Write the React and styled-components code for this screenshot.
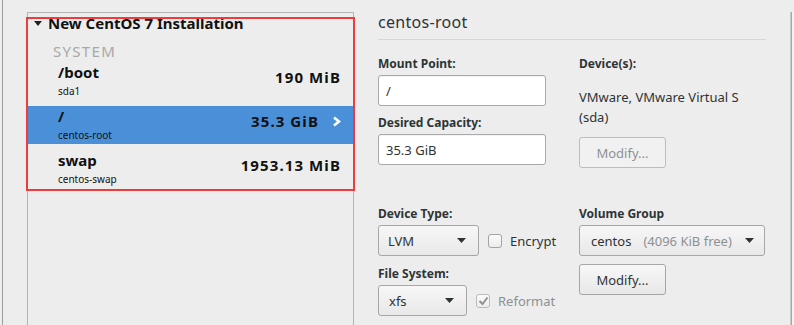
import styled, { createGlobalStyle } from "styled-components";

const GlobalStyle = createGlobalStyle`
  html, body {
    margin: 0;
    padding: 0;
    background: #ededed;
  }
  body {
    font-family: "Noto Sans", "DejaVu Sans", sans-serif;
    color: #2e3436;
  }
  #root {
    width: 794px;
    height: 325px;
    overflow: hidden;
  }
`;

const Page = styled.div`
  display: flex;
  height: 325px;
  padding-left: 2px;
  box-sizing: border-box;
  background: #ededed;
`;

const LeftPane = styled.div`
  flex: none;
  border-left: 1px solid #9e9e9e;
  padding: 12px 0 0 24px;
`;

const Panel = styled.div`
  position: relative;
  width: 327px;
  height: 320px;
  box-sizing: border-box;
  border: 1px solid #b4b4b4;
  border-bottom: none;
`;

/* red annotation frame drawn over the list */
const Highlight = styled.div`
  position: absolute;
  left: -2px;
  top: 4px;
  width: 329px;
  height: 174px;
  box-sizing: border-box;
  border: 2px solid #ef3b3b;
  pointer-events: none;
`;

const ListHeader = styled.div`
  display: flex;
  align-items: center;
  gap: 6px;
  padding: 1px 0 0 6px;
  height: 18px;
  font-size: 15px;
  line-height: 18px;
  font-weight: 700;
  color: #111;
`;

const SectionLabel = styled.div`
  margin: 10px 0 2px;
  padding-left: 25px;
  font-size: 15px;
  line-height: 18px;
  letter-spacing: 1.3px;
  color: #a8a8a8;
`;

const RowList = styled.div`
  display: flex;
  flex-direction: column;
  gap: 6px;
`;

const Row = styled.div`
  height: 38px;
  display: flex;
  justify-content: space-between;
  align-items: flex-start;
  padding: 0 12px 0 30px;
  background: ${(p) => (p.$selected ? "#4a90d9" : "transparent")};
`;

const NameCol = styled.div`
  padding-top: 1px;
`;

const Name = styled.div`
  font-size: 15px;
  line-height: 18px;
  font-weight: 700;
  color: #111;
`;

const Device = styled.div`
  margin-top: 4px;
  font-size: 10px;
  line-height: 12px;
  color: #111;
`;

const ValueWrap = styled.div`
  display: flex;
  align-items: center;
  gap: 13px;
  padding-top: 6px;
`;

const Value = styled.div`
  font-size: 15px;
  line-height: 18px;
  font-weight: 700;
  letter-spacing: 1.1px;
  color: #111;
`;

const RightPane = styled.div`
  flex: none;
  width: 388px;
  margin-left: 24px;
  padding-top: 12px;
`;

const Title = styled.div`
  font-size: 16px;
  line-height: 20px;
  letter-spacing: 0.3px;
  padding-bottom: 7px;
  border-bottom: 1px solid #d6d6d6;
`;

const Block = styled.div`
  display: grid;
  grid-template-columns: 201px 187px;
  margin-top: ${(p) => p.$top}px;
`;

const Column = styled.div`
  display: flex;
  flex-direction: column;
  align-items: flex-start;
`;

const Field = styled.div`
  display: flex;
  flex-direction: column;
  align-items: flex-start;
  margin-top: ${(p) => p.$top || 0}px;
`;

const Label = styled.div`
  font-size: 12px;
  line-height: 16px;
  font-weight: 700;
  margin-bottom: 3px;
`;

const TextInput = styled.div`
  width: 168px;
  height: 31px;
  box-sizing: border-box;
  display: flex;
  align-items: center;
  padding: 0 7px;
  border: 1px solid #a9a9a9;
  border-radius: 3px;
  background: #fff;
  box-shadow: inset 0 1px 1px rgba(0, 0, 0, 0.05);
  font-size: 13px;
`;

const DeviceText = styled.div`
  margin-top: 12px;
  font-size: 13px;
  line-height: 20px;
`;

const Button = styled.div`
  width: 87px;
  height: 31px;
  box-sizing: border-box;
  margin-top: ${(p) => p.$top || 0}px;
  display: flex;
  align-items: center;
  justify-content: center;
  border: 1px solid ${(p) => (p.$disabled ? "#bdbdbd" : "#a6a6a6")};
  border-radius: 3px;
  background: ${(p) =>
    p.$disabled ? "#f1f1f1" : "linear-gradient(#f7f7f7, #e8e8e8)"};
  color: ${(p) => (p.$disabled ? "#8e9192" : "#2e3436")};
  font-size: 13px;
`;

const ControlRow = styled.div`
  display: flex;
  align-items: center;
  gap: 9px;
`;

const Combo = styled.div`
  width: ${(p) => p.$width}px;
  height: 31px;
  box-sizing: border-box;
  display: flex;
  align-items: center;
  justify-content: space-between;
  padding: 0 ${(p) => p.$padRight || 12}px 0 ${(p) => p.$padLeft || 9}px;
  border: 1px solid #a6a6a6;
  border-radius: 3px;
  background: linear-gradient(#f7f7f7, #e8e8e8);
  font-size: 13px;
`;

const Muted = styled.span`
  margin-left: 12px;
  color: #8e9192;
`;

const Check = styled.label`
  display: flex;
  align-items: center;
  gap: 8px;
  font-size: 13px;
  color: ${(p) => (p.$disabled ? "#8e9192" : "#2e3436")};
`;

const Box = styled.span`
  width: 14px;
  height: 14px;
  box-sizing: border-box;
  display: flex;
  align-items: center;
  justify-content: center;
  border: 1px solid ${(p) => (p.$disabled ? "#bcbcbc" : "#a3a3a3")};
  border-radius: 3px;
  background: linear-gradient(#fbfbfb, #ececec);
`;

const EdgeStrip = styled.div`
  flex: none;
  margin: 12px 0 0 24px;
  width: 4px;
  border-left: 1px solid #c9c9c9;
  box-shadow: inset 1px 0 0 #a8a8a8;
  background: #f2f2f2;
`;

const Arrow = () => (
  <svg width="9" height="5" viewBox="0 0 9 5">
    <polygon points="0,0 9,0 4.5,5" fill="#2e3436" />
  </svg>
);

const rows = [
  { name: "/boot", device: "sda1", size: "190 MiB" },
  { name: "/", device: "centos-root", size: "35.3 GiB", selected: true },
  { name: "swap", device: "centos-swap", size: "1953.13 MiB" },
];

export default function App() {
  return (
    <>
      <GlobalStyle />
      <Page>
        <LeftPane>
          <Panel>
            <ListHeader>
              <svg width="8" height="5" viewBox="0 0 8 5">
                <polygon points="0,0 8,0 4,5" fill="#222" />
              </svg>
              New CentOS 7 Installation
            </ListHeader>
            <SectionLabel>SYSTEM</SectionLabel>
            <RowList>
              {rows.map((r) => (
                <Row key={r.device} $selected={r.selected}>
                  <NameCol>
                    <Name>{r.name}</Name>
                    <Device>{r.device}</Device>
                  </NameCol>
                  <ValueWrap>
                    <Value>{r.size}</Value>
                    {r.selected && (
                      <svg width="9" height="11" viewBox="0 0 9 11">
                        <polyline
                          points="2,1.5 7,5.5 2,9.5"
                          fill="none"
                          stroke="#fff"
                          strokeWidth="2.6"
                        />
                      </svg>
                    )}
                  </ValueWrap>
                </Row>
              ))}
            </RowList>
            <Highlight />
          </Panel>
        </LeftPane>

        <RightPane>
          <Title>centos-root</Title>

          <Block $top={16}>
            <Column>
              <Field>
                <Label>Mount Point:</Label>
                <TextInput>/</TextInput>
              </Field>
              <Field $top={9}>
                <Label>Desired Capacity:</Label>
                <TextInput>35.3 GiB</TextInput>
              </Field>
            </Column>
            <Column>
              <Label>Device(s):</Label>
              <DeviceText>
                VMware, VMware Virtual S
                <br />
                (sda)
              </DeviceText>
              <Button $disabled $top={10}>
                Modify...
              </Button>
            </Column>
          </Block>

          <Block $top={38}>
            <Column>
              <Field>
                <Label>Device Type:</Label>
                <ControlRow>
                  <Combo $width={101}>
                    LVM
                    <Arrow />
                  </Combo>
                  <Check>
                    <Box />
                    Encrypt
                  </Check>
                </ControlRow>
              </Field>
              <Field $top={10}>
                <Label>File System:</Label>
                <ControlRow>
                  <Combo $width={89} $padLeft={10}>
                    xfs
                    <Arrow />
                  </Combo>
                  <Check $disabled>
                    <Box $disabled>
                      <svg width="11" height="10" viewBox="0 0 11 10">
                        <polyline
                          points="1.5,5 4.5,8 9.5,1.5"
                          fill="none"
                          stroke="#8e9192"
                          strokeWidth="2"
                        />
                      </svg>
                    </Box>
                    Reformat
                  </Check>
                </ControlRow>
              </Field>
            </Column>
            <Column>
              <Label>Volume Group</Label>
              <Combo $width={186} $padLeft={11} $padRight={10}>
                <span>
                  centos<Muted>(4096 KiB free)</Muted>
                </span>
                <Arrow />
              </Combo>
              <Button $top={8}>Modify...</Button>
            </Column>
          </Block>
        </RightPane>

        <EdgeStrip />
      </Page>
    </>
  );
}
